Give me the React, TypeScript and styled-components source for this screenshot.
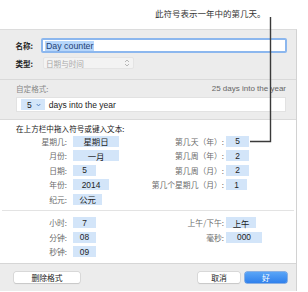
import React from "react";
import styled, { createGlobalStyle } from "styled-components";

const Global = createGlobalStyle`
  html, body { margin: 0; padding: 0; background: #fff; }
  body { font-family: "Liberation Sans", "Noto Sans CJK SC", sans-serif; -webkit-font-smoothing: antialiased; }
  #root { width: 308px; height: 292px; overflow: hidden; }
`;

const Page = styled.div`
  position: relative;
  width: 308px;
  height: 292px;
  display: flex;
  flex-direction: column;
`;

const Caption = styled.div`
  height: 29px;
  box-sizing: border-box;
  padding: 7px 0 0 155px;
  font-size: 8.5px;
  line-height: 12px;
  color: #333;
  font-family: "Noto Sans CJK SC", sans-serif;
`;

const Callout = styled.svg`
  position: absolute;
  left: 0;
  top: 0;
  pointer-events: none;
`;

const Dialog = styled.div`
  width: 297px;
  height: 262px;
  box-sizing: border-box;
  background: #ececec;
  border-top: 1px solid #dcdcdc;
  border-right: 1px solid #d2d2d2;
  display: flex;
  flex-direction: column;
  font-family: "Noto Sans CJK SC", sans-serif;
`;

const TopSection = styled.div`
  height: 50px;
  box-sizing: border-box;
  padding: 8px 0 0 0;
  display: flex;
  flex-direction: column;
  gap: 4px;
  border-bottom: 1px solid #d9d9d9;
`;

const FormRow = styled.div`
  display: flex;
  align-items: center;
`;

const FormLabel = styled.div`
  width: 33px;
  text-align: right;
  font-size: 7.5px;
  font-weight: 700;
  color: #222;
`;

const NameInput = styled.div`
  margin-left: 8px;
  width: 246px;
  height: 15px;
  box-sizing: border-box;
  border: 2px solid #8cb7ee;
  border-radius: 2px;
  background: #fff;
  display: flex;
  align-items: center;
  padding-left: 2px;
`;

const Selected = styled.span`
  background: #b6d6fb;
  color: #1f3f74;
  font-family: "Liberation Sans", sans-serif;
  font-size: 8.8px;
  line-height: 10px;
  padding: 0 1px;
`;

const SelectBox = styled.div`
  margin-left: 10px;
  width: 91px;
  height: 12px;
  box-sizing: border-box;
  border: 1px solid #e4e4e4;
  border-radius: 2px;
  background: #f3f3f3;
  display: flex;
  align-items: center;
  justify-content: space-between;
  padding: 0 3px 0 2px;
  font-size: 7.6px;
  color: #a8a8a8;
`;

const FormatSection = styled.div`
  height: 40px;
  box-sizing: border-box;
  padding: 2px 10px 0 16px;
  border-bottom: 1px solid #dadada;
  display: flex;
  flex-direction: column;
`;

const FormatHeader = styled.div`
  display: flex;
  justify-content: space-between;
  align-items: center;
  height: 12px;
  font-size: 7.6px;
  color: #888;
`;

const Preview = styled.span`
  font-family: "Liberation Sans", sans-serif;
  font-size: 8px;
  color: #666;
`;

const TokenField = styled.div`
  margin-top: 3px;
  width: 270px;
  height: 15px;
  box-sizing: border-box;
  background: #fff;
  border: 1px solid #e2e2e2;
  display: flex;
  align-items: center;
  padding-left: 4px;
  gap: 4px;
  font-family: "Liberation Sans", sans-serif;
  font-size: 8.5px;
  color: #222;
`;

const MenuToken = styled.span`
  background: #d3e5f9;
  height: 11px;
  display: inline-flex;
  align-items: center;
  padding: 0 4px 0 6px;
  gap: 4px;
  font-size: 8.5px;
  color: #222;
`;

const WhiteSection = styled.div`
  flex: 1;
  background: #fff;
  padding-top: 3px;
  display: flex;
  flex-direction: column;
`;

const Title = styled.div`
  height: 11px;
  line-height: 11px;
  padding-left: 16px;
  font-size: 7.6px;
  color: #222;
`;

const Grid = styled.div<{ $rows: number }>`
  display: grid;
  grid-template-columns: 67px 83px 74px 1fr;
  grid-template-rows: repeat(${(p) => p.$rows}, 14.5px);
  align-items: center;
`;

const Label = styled.div`
  text-align: right;
  font-size: 7.8px;
  color: #6a6a6a;
  white-space: nowrap;
`;

const Token = styled.div<{ $w: number; $gap: number }>`
  margin-left: ${(p) => p.$gap}px;
  width: ${(p) => p.$w}px;
  height: 11px;
  background: #d3e5f9;
  display: flex;
  align-items: center;
  justify-content: center;
  font-size: 8.4px;
  color: #1e1e1e;
  font-family: "Liberation Sans", "Noto Sans CJK SC", sans-serif;
`;

const Divider = styled.div`
  margin: 3px 2px 5px 2px;
  height: 1px;
  background: #e3e3e3;
`;

const Empty = styled.div``;

const Footer = styled.div`
  height: 28px;
  box-sizing: border-box;
  border-top: 1px solid #d6d6d6;
  display: flex;
  align-items: center;
  gap: 5px;
  padding: 0 9px 0 14px;
`;

const Button = styled.div<{ $w: number; $primary?: boolean }>`
  width: ${(p) => p.$w}px;
  height: 11px;
  border-radius: 2px;
  box-sizing: border-box;
  display: flex;
  align-items: center;
  justify-content: center;
  font-size: 7.8px;
  color: ${(p) => (p.$primary ? "#fff" : "#222")};
  background: ${(p) =>
    p.$primary ? "linear-gradient(#5aa5f7, #2f80ec)" : "#fff"};
  box-shadow: ${(p) =>
    p.$primary
      ? "0 0 0 0.5px #2a74d8"
      : "0 0 0 0.5px #c8c8c8, 0 0.5px 1px rgba(0,0,0,0.15)"};
`;

const Spacer = styled.div`
  flex: 1;
`;

const Stepper = () => (
  <svg width="6" height="8" viewBox="0 0 6 8">
    <path d="M1 3 L3 1 L5 3" fill="none" stroke="#b0b0b0" strokeWidth="0.9" />
    <path d="M1 5 L3 7 L5 5" fill="none" stroke="#b0b0b0" strokeWidth="0.9" />
  </svg>
);

const ChevronDown = () => (
  <svg width="5" height="4" viewBox="0 0 5 4">
    <path d="M0.7 1 L2.5 2.9 L4.3 1" fill="none" stroke="#4a78bd" strokeWidth="0.9" />
  </svg>
);

type Cell = { label: string; value: string; w: number } | null;

const dateRows: [Cell, Cell][] = [
  [{ label: "星期几:", value: "星期日", w: 46 }, { label: "第几天（年）:", value: "5", w: 23 }],
  [{ label: "月份:", value: "一月", w: 46 }, { label: "第几周（年）:", value: "2", w: 23 }],
  [{ label: "日期:", value: "5", w: 23 }, { label: "第几周（月）:", value: "2", w: 23 }],
  [{ label: "年份:", value: "2014", w: 36 }, { label: "第几个星期几（月）:", value: "1", w: 21 }],
  [{ label: "纪元:", value: "公元", w: 29 }, null],
];

const timeRows: [Cell, Cell][] = [
  [{ label: "小时:", value: "7", w: 23 }, { label: "上午/下午:", value: "上午", w: 30 }],
  [{ label: "分钟:", value: "08", w: 23 }, { label: "毫秒:", value: "000", w: 36 }],
  [{ label: "秒钟:", value: "09", w: 23 }, null],
];

const renderRows = (rows: [Cell, Cell][]) =>
  rows.flatMap(([l, r], i) => [
    l ? <Label key={`ll${i}`}>{l.label}</Label> : <Empty key={`ll${i}`} />,
    l ? <Token key={`lt${i}`} $w={l.w} $gap={6}>{l.value}</Token> : <Empty key={`lt${i}`} />,
    r ? <Label key={`rl${i}`}>{r.label}</Label> : <Empty key={`rl${i}`} />,
    r ? <Token key={`rt${i}`} $w={r.w} $gap={2}>{r.value}</Token> : <Empty key={`rt${i}`} />,
  ]);

export default function App() {
  return (
    <>
      <Global />
      <Page>
        <Caption>此符号表示一年中的第几天。</Caption>
        <Dialog>
          <TopSection>
            <FormRow>
              <FormLabel>名称:</FormLabel>
              <NameInput>
                <Selected>Day counter</Selected>
              </NameInput>
            </FormRow>
            <FormRow>
              <FormLabel>类型:</FormLabel>
              <SelectBox>
                <span>日期与时间</span>
                <Stepper />
              </SelectBox>
            </FormRow>
          </TopSection>
          <FormatSection>
            <FormatHeader>
              <span>自定格式:</span>
              <Preview>25 days into the year</Preview>
            </FormatHeader>
            <TokenField>
              <MenuToken>
                5 <ChevronDown />
              </MenuToken>
              <span>days into the year</span>
            </TokenField>
          </FormatSection>
          <WhiteSection>
            <Title>在上方栏中拖入符号或键入文本:</Title>
            <Grid $rows={5}>{renderRows(dateRows)}</Grid>
            <Divider />
            <Grid $rows={3}>{renderRows(timeRows)}</Grid>
          </WhiteSection>
          <Footer>
            <Button $w={66}>删除格式</Button>
            <Spacer />
            <Button $w={42}>取消</Button>
            <Button $w={42} $primary>好</Button>
          </Footer>
        </Dialog>
        <Callout width="308" height="292" viewBox="0 0 308 292">
          <path d="M270.5 17 L270.5 141.5 L250 141.5" fill="none" stroke="#3a3a3a" strokeWidth="1.4" />
        </Callout>
      </Page>
    </>
  );
}
